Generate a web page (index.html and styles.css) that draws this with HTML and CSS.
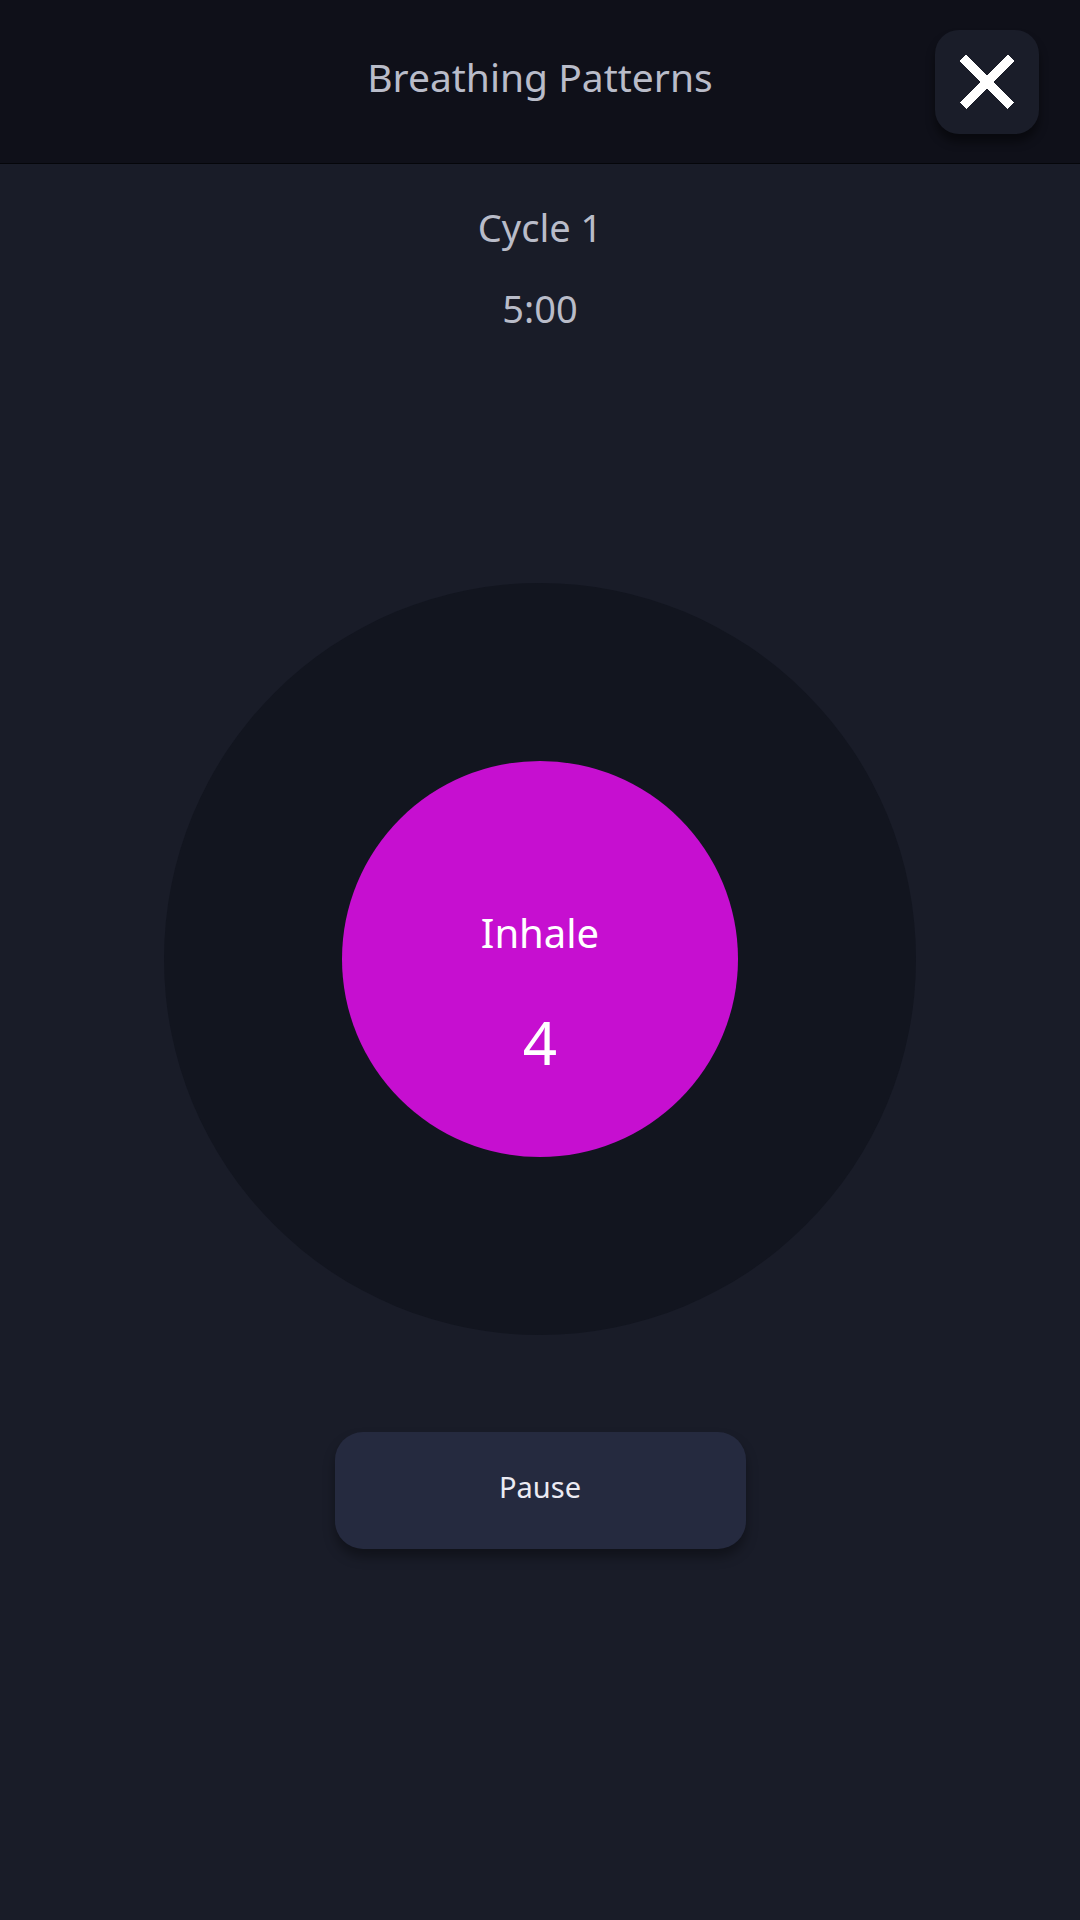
FILE: index.html
```html
<!DOCTYPE html>
<html lang="en">
<head>
  <meta charset="UTF-8">
  <meta name="viewport" content="width=device-width, initial-scale=1.0">
  <title>Breathing Patterns</title>
  <link rel="stylesheet" href="styles.css">
</head>
<body>
  <header class="top-bar">
    <span></span>
    <h1 class="title">Breathing Patterns</h1>
    <button class="close-btn" aria-label="Close">
      <svg width="54" height="54" viewBox="0 0 54 54" shape-rendering="crispEdges">
        <path d="M3 3 L51 51 M51 3 L3 51" stroke="#fff" stroke-width="9" fill="none"/>
      </svg>
    </button>
  </header>

  <main class="session">
    <div class="cycle">Cycle 1</div>
    <div class="timer">5:00</div>

    <div class="outer-ring">
      <div class="breath-ball">
        <div class="phase">Inhale</div>
        <div class="count">4</div>
      </div>
    </div>

    <button class="pause-btn">Pause</button>
  </main>
</body>
</html>
```

FILE: styles.css
```css
html, body {
  margin: 0;
  height: 100%;
}
body {
  font-family: "Noto Sans", "Open Sans", sans-serif;
  background: #191c28;
  color: #b9bcc9;
}
.top-bar {
  height: 164px;
  box-sizing: border-box;
  background: #0f1019;
  border-bottom: 1px solid #05060a;
  display: grid;
  grid-template-columns: 1fr auto 1fr;
  align-items: center;
}
.title {
  margin: 0 0 10px;
  font-size: 39px;
  font-weight: 400;
  color: #b9bcc9;
}
.close-btn {
  justify-self: end;
  margin-right: 41px;
  width: 104px;
  height: 104px;
  border: none;
  border-radius: 24px;
  background: #1a1d29;
  box-shadow: 0 8px 10px rgba(0, 0, 0, 0.45);
  display: flex;
  align-items: center;
  justify-content: center;
  padding: 0;
}
.session {
  display: flex;
  flex-direction: column;
  align-items: center;
  padding-top: 36px;
}
.cycle, .timer {
  font-size: 38px;
  line-height: 54px;
}
.timer {
  margin-top: 27px;
}
.outer-ring {
  margin-top: 248px;
  width: 752px;
  height: 752px;
  border-radius: 50%;
  background: #12151f;
  display: flex;
  align-items: center;
  justify-content: center;
}
.breath-ball {
  width: 396px;
  height: 396px;
  border-radius: 50%;
  background: #c60fd0;
  color: #fff;
  display: flex;
  flex-direction: column;
  align-items: center;
  box-sizing: border-box;
  padding-top: 145px;
}
.phase {
  font-size: 40px;
  line-height: 54px;
}
.count {
  margin-top: 42px;
  font-size: 60px;
  line-height: 80px;
}
.pause-btn {
  margin-top: 97px;
  width: 411px;
  height: 117px;
  padding: 0 0 8px;
  border: none;
  border-radius: 28px;
  background: #252a3f;
  color: #ecebf3;
  font-family: inherit;
  font-size: 29px;
  box-shadow: 0 8px 12px rgba(0, 0, 0, 0.35);
}
```
